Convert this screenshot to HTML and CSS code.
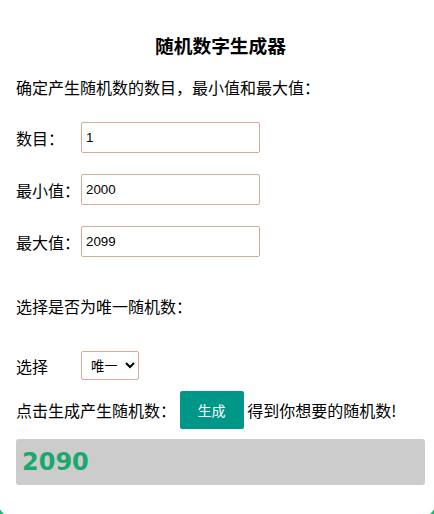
FILE: index.html
```html
<!DOCTYPE html>
<html lang="zh">
<head>
<meta charset="utf-8">
<title>随机数字生成器</title>
<link rel="stylesheet" href="styles.css">
</head>
<body>
<div class="card">
  <h3 class="title">随机数字生成器</h3>
  <p class="intro">确定产生随机数的数目，最小值和最大值：</p>
  <div class="fields">
    <div class="row"><span class="label">数目：</span><input class="field" type="text" value="1"></div>
    <div class="row"><span class="label">最小值：</span><input class="field" type="text" value="2000"></div>
    <div class="row"><span class="label">最大值：</span><input class="field" type="text" value="2099"></div>
  </div>
  <p class="intro2">选择是否为唯一随机数：</p>
  <div class="row sel-row"><span class="label">选择</span><select class="pick"><option>唯一</option><option>不唯一</option></select></div>
  <div class="gen-row">点击生成产生随机数： <button class="gen" type="button">生成</button> 得到你想要的随机数!</div>
  <div class="result">2090</div>
</div>
</body>
</html>
```

FILE: styles.css
```css
html, body {
  margin: 0;
  padding: 0;
  background: #fff;
}
body {
  font-family: "Noto Sans CJK SC", "Noto Sans", sans-serif;
  font-size: 16px;
  color: #000;
  overflow: hidden;
}
.card {
  margin: -14px -6px 0 -6px;
  border: 3px solid #22b573;
  border-radius: 25px;
  padding: 43px 12px 35px 19px;
}
.title {
  margin: 0;
  font-size: 18.72px;
  line-height: 26px;
  font-weight: bold;
  text-align: center;
}
.intro {
  margin: 17px 0 0 0;
  line-height: 24px;
}
.fields {
  margin-top: 23px;
  display: flex;
  flex-direction: column;
  gap: 21px;
}
.row {
  display: flex;
  align-items: center;
}
.label {
  width: 65px;
  line-height: 24px;
}
.field {
  box-sizing: border-box;
  width: 179px;
  height: 31px;
  margin: 0;
  border: 1px solid #d4ab98;
  border-radius: 2px;
  padding: 0 4px;
  font-family: "Liberation Sans", Arial, sans-serif;
  font-size: 13.33px;
  color: #000;
  outline: none;
}
.intro2 {
  margin: 37px 0 0 0;
  line-height: 24px;
}
.sel-row {
  margin-top: 33px;
}
.pick {
  box-sizing: border-box;
  width: 58px;
  height: 29px;
  margin: 0;
  border: 1px solid #d4ab98;
  border-radius: 2px;
  background: #fff;
  font-family: "Noto Sans CJK SC", sans-serif;
  font-size: 13.33px;
  color: #000;
  padding: 0 2px 0 5px;
}
.gen-row {
  margin-top: 11px;
  line-height: 38px;
  height: 38px;
  white-space: nowrap;
}
.gen {
  box-sizing: border-box;
  width: 64px;
  height: 38px;
  border: none;
  border-radius: 2px;
  background: #009688;
  color: #fff;
  font-family: "Noto Sans CJK SC", sans-serif;
  font-size: 14px;
  vertical-align: top;
  padding: 0;
}
.result {
  margin-top: 10px;
  box-sizing: border-box;
  width: 409px;
  height: 46px;
  background: #cccccc;
  border-radius: 3px;
  padding: 0 6px;
  font-family: "DejaVu Sans", Verdana, sans-serif;
  font-weight: bold;
  font-size: 24px;
  line-height: 46px;
  color: #1ba86f;
}
```
